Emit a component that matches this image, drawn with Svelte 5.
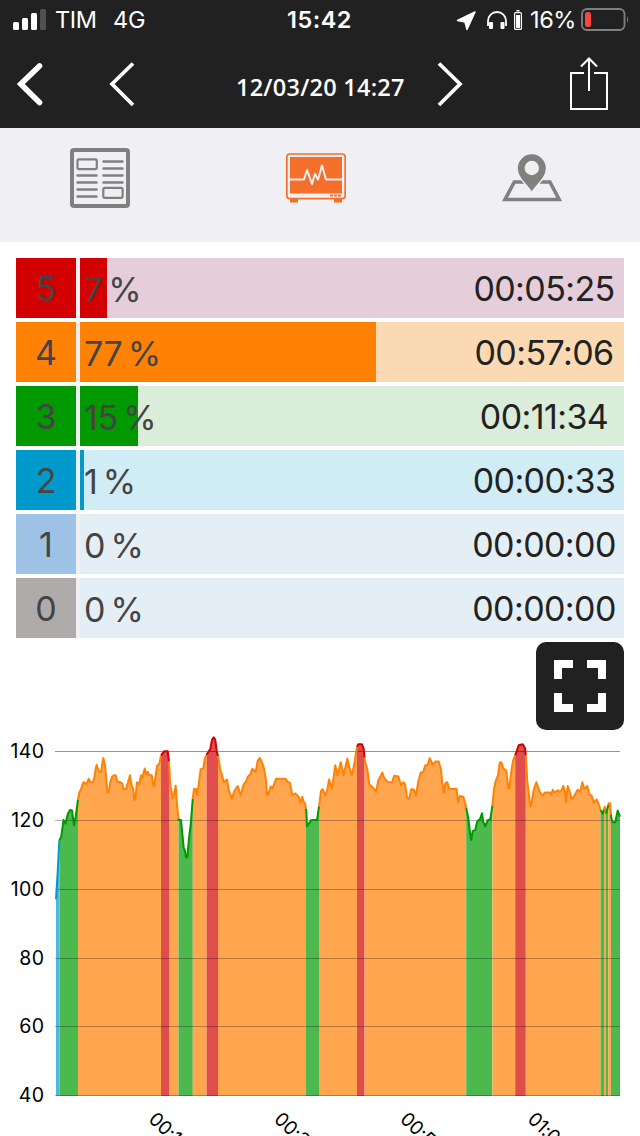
<script>
	const zones = [
		{ id: 5, percent: 7, time: '00:05:25', color: '#d20000', back: '#e5cdd9', bar: 27 },
		{ id: 4, percent: 77, time: '00:57:06', color: '#ff8204', back: '#fbdab3', bar: 296 },
		{ id: 3, percent: 15, time: '00:11:34', color: '#009a00', back: '#d9edd9', bar: 58 },
		{ id: 2, percent: 1, time: '00:00:33', color: '#0099cc', back: '#d0edf6', bar: 4 },
		{ id: 1, percent: 0, time: '00:00:00', color: '#9dc2e6', back: '#e4eff5', bar: 0 },
		{ id: 0, percent: 0, time: '00:00:00', color: '#afabab', back: '#e4eff5', bar: 0 }
	];

	const line = { 2: '#0099cc', 3: '#009a00', 4: '#ff8204', 5: '#d20000' };
	const area = { 2: '#4db8db', 3: '#4db84d', 4: '#ffa64f', 5: '#e04d4d' };

	// [end x, zone]
	const bands = [
		[59.5, 2], [78, 3], [161, 4], [169, 5], [178.5, 4], [192.8, 3], [206.6, 4], [218, 5],
		[306, 4], [319, 3], [357, 4], [364.6, 5], [466.2, 4], [492.4, 3], [515.2, 4], [525.8, 5],
		[600.6, 4], [604, 3], [606, 4], [608.3, 3], [611, 4], [620, 3]
	];

	// x position and heart rate
	const samples = `56,97 57.7,105 59.3,114 61.3,115.3 63.5,120 65.5,119 68,122 70.3,123 72,122.8 74,118.5 75.7,121 78,126
		79.3,128 81,129 83.3,131 86.5,130.5 88.7,132 90.3,131 93,131 94.3,132.3 95.7,135 96.7,136 98.7,134.2 101,134 103.3,138
		105,136 106,133 107,129 107.7,128 108.7,128 110.3,131 112.3,132.7 114,133 115.7,133 117.3,131.2 120,131 122.3,130.6
		123.3,129 126,129 128,131 130,133 131.7,130 133.3,129 134.3,126 135.3,126 137,131 139.3,130.4 141,133 142.3,132.2
		144.7,135 146.3,133.3 147.7,134 149.3,133 151.7,133 153.3,130 154.3,130 157,135.7 159.3,136.4 161,138.7 164.3,140
		167.7,140 169,137 170.3,130.3 172.7,126.3 174,127.5 175.7,130 177,124.5 178.7,120 181,120 183.7,112 185,111 186,109.2
		187.3,109.2 189,114.8 190.7,118.7 192.7,126 194,129 196,129 197,127.3 198.7,130.3 200.7,134.8 203.3,135 204.7,137.7
		207,139.2 210.3,140.6 212,143.3 213.7,144 215.3,143.3 216.7,140 218.3,138.3 220.3,134.6 222,133 223.7,131 227,131.8
		228.7,128.8 232,126.2 234,128.3 237.7,129.9 240.7,127.2 243.7,130.4 246,131.2 248,132.7 250.3,133.3 252.3,134.9
		255.7,134 257.7,137.2 259.7,138 262,136.8 264,135 266,131.6 267,127.6 268,127.2 270.7,129.8 272.7,129.3 276,132
		285.7,132 287.7,131.1 290,130.8 292.3,127.2 295.3,127.7 298.7,126.8 300.7,125 302.3,126.8 303.7,125.3 305,124.9
		306.3,122.8 307,118.2 311.3,120 317,120 319,124 321,128.4 322.7,129 325.3,127.2 327.3,128.7 329,131.8 332,129.2
		333.7,132.7 335.3,135.9 337.7,133 340.7,136.8 343.7,133 347.3,137.9 349.3,135.4 351.7,133 354.3,136.2 357,141.3
		358.3,142 362,142 363.7,140.7 365,137 367.3,134.8 369.3,130.4 372.7,129.5 376,128.2 378.3,131.5 382.3,133.8
		384.3,132.2 388,131 392,131 394.3,132.9 398.3,132.7 401,130.2 403.3,131 405,130.5 407,126.6 409,126.1 411.3,129
		414,128.8 416,127.1 418.3,131.2 420.7,133.8 423.3,134 425.3,135.9 427.7,135.9 429.7,138 433,136 435.3,137 438.7,137
		441,134.6 442.3,130.8 443.7,128 445.3,130.7 447.3,131 449.3,129.1 456.7,129 458,125.2 460,127 463.3,126.8
		465.7,124.5 466.7,122.8 468.3,120.6 470.3,115.8 471.3,114.2 472.7,116.8 475.3,117.2 477.3,119.7 480,120.3 482,122
		483.3,119.4 485.3,118.2 487.7,120 490.3,120.3 492.3,124 494,129 495.3,131 498,133 499.7,136.6 501.3,136.8
		503.3,135 506.3,134.3 508.3,129.3 509.3,129.3 511.3,134.1 513,137.2 515.7,139.2 518.7,141.7 522.7,142 525,140.9
		526,138.2 527.3,131.2 529,127.3 530.3,124 531.3,124.5 533.7,128.8 536.3,131 539.7,128.2 542.7,127.1 544.7,128
		550,128 551.3,127.3 552.7,128.8 554.7,128 558,128.7 559.7,128.2 561.3,128.5 563.3,129.9 565,128.3 566,125.1
		567.7,129.9 569.7,128.3 571.7,126 575,127.4 577.7,128.8 580.3,128.3 582.3,131 584.3,129 587.3,129.9 589.3,127.6
		591.7,127 594,125.1 596.7,126 598.7,124.6 600.7,122.9 602.7,121.8 604.7,123.9 606.3,122.1 608.7,124.9 610,124.9
		611.3,120.6 612.7,119.4 615.3,119.4 617.7,122.8 620,121`
		.split(/\s+/)
		.map((p) => p.split(',').map(Number));

	const bottom = 365.9;
	const y = (bpm) => bottom - (bpm - 40) * 3.447;
	const gridY = (bpm) => Math.floor(y(bpm)) + 0.5;

	function rateAt(x) {
		const i = Math.max(1, samples.findIndex((s) => s[0] >= x));
		const [x0, r0] = samples[i - 1];
		const [x1, r1] = samples[i];
		return r0 + ((r1 - r0) * (x - x0)) / (x1 - x0);
	}

	const segments = bands.map(([to, zone], i) => {
		const from = i ? bands[i - 1][0] : 56;
		const inner = samples.filter((s) => s[0] > from && s[0] < to);
		const points = [[from, rateAt(from)], ...inner, [to, rateAt(to)]]
			.map(([x, rate]) => `${x},${y(rate).toFixed(1)}`)
			.join(' ');
		return { from, to, zone, points };
	});

	const rates = [140, 120, 100, 80, 60, 40];
	const times = [
		[147.5, '00:16'],
		[273, '00:33'],
		[399, '00:50'],
		[526.5, '01:06']
	];
</script>

<div class="screen">
	<header>
		<div class="status">
			<svg class="signal" width="34" height="22" viewBox="0 0 34 22">
				<rect x="0" y="13" width="6" height="8" rx="1.5" fill="#fff" />
				<rect x="9" y="9" width="6" height="12" rx="1.5" fill="#fff" />
				<rect x="18" y="4" width="6" height="17" rx="1.5" fill="#fff" />
				<rect x="27" y="0" width="6" height="21" rx="1.5" fill="#505050" />
			</svg>
			<span class="carrier">TIM</span>
			<span class="network">4G</span>
			<span class="clock">15:42</span>
			<svg class="indicators" width="68" height="24" viewBox="456 8 68 24">
				<path d="M457.5 20.500 475 12 467 29.500 465 22Z" fill="#fff" stroke="#fff" stroke-width="1.500" stroke-linejoin="round" />
				<path d="M488 26V21a9 9 0 0 1 18 0v5" fill="none" stroke="#fff" stroke-width="1.8" />
				<rect x="489" y="22" width="4" height="7" rx="1" fill="#fff" />
				<rect x="500.5" y="22" width="4" height="7" rx="1" fill="#fff" />
				<rect x="514.6" y="12.6" width="6.8" height="16.8" rx="1" fill="none" stroke="#fff" stroke-width="1.2" />
				<path d="M516 15h4v13h-4zM516.5 10h3v1.5h-3z" fill="#fff" />
			</svg>
			<span class="charge">16%</span>
			<svg class="battery" width="49" height="24" viewBox="580 8 49 24">
				<rect x="582" y="9" width="42.5" height="21" rx="5" fill="none" stroke="#808080" stroke-width="1.8" />
				<rect x="585" y="12" width="6" height="15" rx="2.5" fill="#ff453a" />
				<path d="M627 16q2 3.5 0 7z" fill="#808080" />
			</svg>
		</div>
		<nav>
			<svg class="back" width="28" height="46" viewBox="16 61 28 46">
				<path d="M39.500 66 20.800 84l18.700 18.500" fill="none" stroke="#fff" stroke-width="5.600" stroke-linecap="round" />
			</svg>
			<svg class="prev" width="28" height="46" viewBox="108 61 28 46">
				<path d="M133 63.500 112 84l21 21" fill="none" stroke="#fff" stroke-width="3.700" />
			</svg>
			<h1>12/03/20 14:27</h1>
			<svg class="next" width="28" height="46" viewBox="436 61 28 46">
				<path d="M439 63.500 460 84l-21 21" fill="none" stroke="#fff" stroke-width="3.700" />
			</svg>
			<svg class="share" width="40" height="54" viewBox="569 57 40 54">
				<path d="M584 73H571v36h36V73H594M589 91V59M581 66.500l8-8 8 8" fill="none" stroke="#fff" stroke-width="2" />
			</svg>
		</nav>
	</header>

	<div class="tabs">
		<svg width="60" height="60" viewBox="70 148 60 60" fill="none" stroke="#80807f">
			<rect x="72" y="150" width="56" height="56" rx="2" stroke-width="4" />
			<rect x="77.500" y="159.300" width="19.300" height="9.800" rx="1.500" stroke-width="2.200" />
			<rect x="103.300" y="187.800" width="19.300" height="10" rx="1.500" stroke-width="2.200" />
			<path
				d="M103.500 161.500h19M103.500 168.500h19M103.500 175.500h19M103.500 182.500h19M77.500 175.500h19M77.500 182.500h19M77.500 189.500h19M77.500 196.500h19"
				stroke-width="2.500"
				stroke-linecap="round"
			/>
		</svg>
		<svg width="60" height="60" viewBox="286 148 60 60">
			<rect x="286.800" y="154" width="58.400" height="44.700" rx="3" fill="none" stroke="#f36f2a" stroke-width="1.700" />
			<path d="M290 157h52v36.500h-52zM290 199h8v3.500h-8zM334 199h8v3.500h-8z" fill="#f36f2a" />
			<path d="M290 179.500h14l3-9.500 5 14 3-10 3 5.500 4-14 4 14h16" fill="none" stroke="#f0eff4" stroke-width="2" stroke-linejoin="round" />
			<path d="M330 195.500h11" stroke="#f36f2a" stroke-width="1.800" stroke-dasharray="3 1" />
		</svg>
		<svg width="60" height="60" viewBox="502 148 60 60">
			<path d="M524 182H514.300l-9.300 17.500h54.200l-9.300-17.500h-10" fill="none" stroke="#80807f" stroke-width="3.600" />
			<path d="M531.800 191.500c-2-5-14-13-14-23.200a14 14 0 0 1 28 0c0 10.200-12 18.200-14 23.200z" fill="#80807f" stroke="#f0eff4" stroke-width="3" paint-order="stroke" />
			<circle cx="531.800" cy="168" r="7.200" fill="#f0eff4" />
		</svg>
	</div>

	<div class="zones">
		{#each zones as zone}
			<div class="zone">
				<div class="number" style="background: {zone.color}">{zone.id}</div>
				<div class="track" style="background: linear-gradient(to right, {zone.color} {zone.bar}px, {zone.back} {zone.bar}px)">
					<span class="percent">{zone.percent} %</span>
					<span class="time">{zone.time}</span>
				</div>
			</div>
		{/each}
	</div>

	<button aria-label="Full screen">
		<svg width="52" height="52" viewBox="0 0 52 52">
			<path d="M0 0h19v8H8v11H0zM33 0h19v19h-8V8H33zM0 33h8v11h11v8H0zM44 33h8v19H33v-8h11z" fill="#fff" />
		</svg>
	</button>

	<svg class="chart" width="640" height="406" viewBox="0 0 640 406">
		{#each segments as s}
			<polygon points="{s.from},{bottom} {s.points} {s.to},{bottom}" fill={area[s.zone]} />
		{/each}
		{#each rates as rate}
			<line x1="55" x2="620" y1={gridY(rate)} y2={gridY(rate)} stroke="#000" stroke-opacity={rate === 140 ? 0.42 : 0.28} />
			<text class="rate" x="44.500" y={gridY(rate) + 6} text-anchor="end">{rate}</text>
		{/each}
		{#each segments as s}
			<polyline points={s.points} fill="none" stroke={line[s.zone]} stroke-width="2" stroke-linejoin="round" />
		{/each}
		{#each times as [x, label]}
			<text class="tick" transform="translate({x} 390.5) rotate(43)">{label}</text>
		{/each}
	</svg>
</div>

<style>
	:global(body) {
		background: #fff;
		overflow: hidden;
	}

	.screen {
		width: 640px;
		height: 1136px;
		overflow: hidden;
		display: flex;
		flex-direction: column;
		font-family: Inter, "Liberation Sans", sans-serif;
	}

	svg {
		display: block;
		flex: none;
	}

	header {
		height: 128px;
		background: #212121;
		color: #fff;
	}

	.status {
		height: 40px;
		display: flex;
		align-items: center;
		font-size: 23.5px;
		line-height: 42px;
		white-space: nowrap;
	}

	.signal {
		margin-left: 13px;
	}

	.carrier {
		width: 58px;
		margin-left: 8px;
		letter-spacing: -0.4px;
	}

	.network {
		width: 174px;
		letter-spacing: -0.3px;
	}

	.clock {
		width: 169px;
		font-weight: 600;
		letter-spacing: 0.5px;
	}

	.charge {
		width: 48px;
		margin-left: 6px;
		letter-spacing: -0.4px;
	}

	.battery {
		margin-left: 2px;
	}

	nav {
		display: flex;
		align-items: center;
		height: 88px;
	}

	.back {
		margin-left: 16px;
	}

	.prev {
		margin-left: 64px;
	}

	h1 {
		width: 200px;
		margin: 6px 0 0 100px;
		font: 600 23.5px/34px "Open Sans", "Noto Sans", sans-serif;
		letter-spacing: 0.25px;
		white-space: nowrap;
	}

	.share {
		margin-left: 105px;
	}

	.tabs {
		display: flex;
		justify-content: space-between;
		height: 94px;
		padding: 20px 78px 0 70px;
		background: #f0eff4;
	}

	.zones {
		display: flex;
		flex-direction: column;
		gap: 4px;
		padding: 16px 16px 0;
	}

	.zone {
		display: flex;
		height: 60px;
		background: #f0eff4;
		gap: 4px;
		font-size: 34px;
		line-height: 62px;
	}

	.number {
		width: 60px;
		text-align: center;
		color: #444;
	}

	.track {
		flex: 1;
		display: flex;
		justify-content: space-between;
	}

	.percent {
		padding: 1px 0 0 4px;
		word-spacing: -4px;
		letter-spacing: -0.3px;
		color: #444;
	}

	.time {
		width: 160px;
		text-align: center;
		letter-spacing: -0.6px;
		color: #222;
	}

	button {
		align-self: flex-end;
		display: flex;
		align-items: center;
		justify-content: center;
		flex: none;
		width: 88px;
		height: 88px;
		margin: 4px 16px 0 0;
		padding: 0;
		border: none;
		border-radius: 10px;
		background: #212121;
	}

	.chart {
		flex: none;
	}

	.rate,
	.tick {
		font-size: 19.5px;
		letter-spacing: 0.4px;
		fill: #000;
	}

	.tick {
		font-size: 19px;
		letter-spacing: -0.3px;
	}
</style>
